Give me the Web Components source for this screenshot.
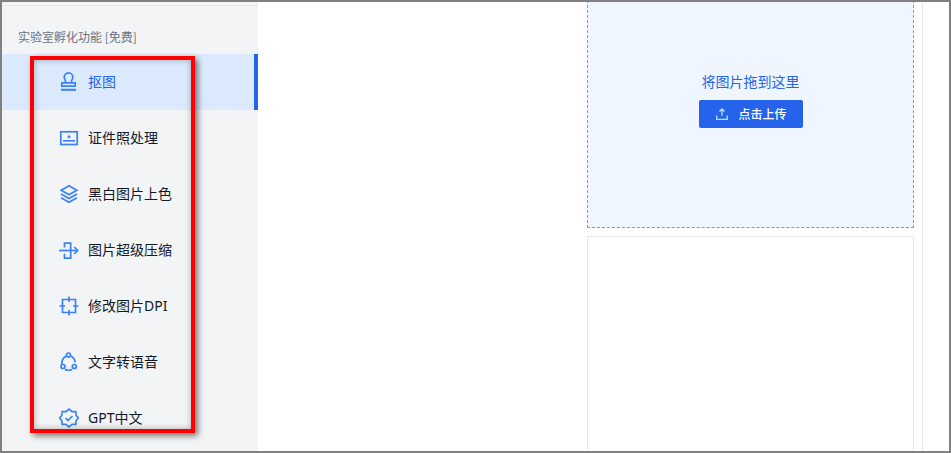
<!DOCTYPE html>
<html lang="zh"><head><meta charset="utf-8"><title>实验室孵化功能</title>
<style>
html,body{margin:0;padding:0;background:#fff;font-family:"Noto Sans","Noto Sans CJK SC",sans-serif}
</style></head><body>
<app-frame>
  <side-bar label="实验室孵化功能 [免费]">
    <nav-item active text="抠图" icon="stamp"></nav-item>
    <nav-item text="证件照处理" icon="id"></nav-item>
    <nav-item text="黑白图片上色" icon="layers"></nav-item>
    <nav-item text="图片超级压缩" icon="door"></nav-item>
    <nav-item text="修改图片DPI" icon="puzzle"></nav-item>
    <nav-item text="文字转语音" icon="share"></nav-item>
    <nav-item text="GPT中文" icon="badge"></nav-item>
  </side-bar>
  <main-panel>
    <drop-zone></drop-zone>
  </main-panel>
  <red-mark></red-mark>
</app-frame>
<script>
const ICONS={
stamp:'<path d="M6.500 10.500V9.300C6.500 8 5.200 7 5.200 5.200a4.300 4.300 0 0 1 8.600 0C13.800 7 12.500 8 12.500 9.300v1.200"/><path d="M2.800 14.200v-3.400h13.400v3.400z"/><path d="M2 17.800h15" stroke-width="2"/>',
id:'<rect x="1.800" y="3.800" width="16.400" height="12.700"/><path d="M4 12.800h12"/><circle cx="10" cy="8.700" r="1.500" fill="#3b82f6" stroke="none"/>',
layers:'<path d="M10 1.800 17.800 6.300 10 10.800 2.200 6.300z"/><path d="M2 10 10 14.500 18 10"/><path d="M2 13.700 10 18.200 18 13.700"/>',
door:'<path d="M5.500 7.500V3.200h6.200v15H5.500v-4.500"/><path d="M0 10.500h18.500"/><path d="M15.200 7 18.700 10.500l-3.500 3.500"/>',
puzzle:'<path d="M3.500 3.500h13v13h-13z"/><path d="M10 .5v5.500M10 14v5.500M.5 10h5.500M14 10h5.500"/>',
share:'<circle cx="9.500" cy="3" r="2"/><circle cx="4" cy="14.500" r="2"/><circle cx="15.300" cy="14.500" r="2"/><path d="M7.600 3.800C4.300 5.400 2.600 8.500 2.800 12.700M11.400 3.800c2.600 1.300 4.300 3.600 4.900 6.500M6 17.200c2.200 1.300 4.800 1.300 7 .2"/>',
badge:'<path d="M10 1.200 13 3.700h3.800l.4 3.800L19.500 10l-2.300 2.500-.4 3.800H13L10 18.800 7 16.300H3.200l-.4-3.800L.5 10l2.300-2.500.4-3.800H7z"/><path d="M6.500 10l2.500 2.500 4.500-4.500"/>'
};
function def(name,css,html){
  customElements.define(name,class extends HTMLElement{
    connectedCallback(){
      if(this.shadowRoot)return;
      const r=this.attachShadow({mode:'open'});
      r.innerHTML='<style>'+css+'</style>'+(typeof html==='function'?html(this):html);
    }
  });
}
def('app-frame',`:host{display:flex;position:relative;box-sizing:border-box;width:951px;height:453px;border:2px solid #808080;overflow:hidden;background:#fff}`,'<slot></slot>');
def('side-bar',`:host{display:block;flex:none;width:256px;background:#f3f4f6;box-sizing:border-box;padding-top:3px}
.top{height:1px;background:#e5e7eb}
.label{height:48px;box-sizing:border-box;padding:22px 0 0 16px;font:12px/17px "Noto Sans CJK SC",sans-serif;color:#6b7280}`,
 h=>`<div class="top"></div><div class="label">${h.getAttribute('label')}</div><slot></slot>`);
def('nav-item',`:host{display:flex;align-items:center;gap:9px;box-sizing:border-box;height:56px;padding-left:57px;font:14px/20px "Noto Sans","Noto Sans CJK SC",sans-serif;color:#111827}
:host([active]){background:#dbeafe;color:#2563eb;border-right:4px solid #2563eb}
svg{width:20px;height:20px;flex:none;fill:none;stroke:#3b82f6;stroke-width:1.700}`,
 h=>`<svg viewBox="0 0 20 20">${ICONS[h.getAttribute('icon')]}</svg><span>${h.getAttribute('text')}</span>`);
def('main-panel',`:host{display:flex;flex:1;min-width:0;background:#fff}
.col{flex:1;min-width:0;box-sizing:border-box;padding:0 8px 0 329px}
.rail{flex:none;width:26px;border-left:1px solid #e5e7eb}
.card{margin-top:8px;height:300px;border:1px solid #e5e7eb;box-sizing:border-box}`,
 `<div class="col"><slot></slot><div class="card"></div></div><div class="rail"></div>`);
def('drop-zone',`:host{display:flex;flex-direction:column;align-items:center;justify-content:center;gap:9px;box-sizing:border-box;height:258px;margin-top:-32px;background:#eff6ff;border:1px dashed #6b9cf0;color:#2563eb;font:14px/20px "Noto Sans CJK SC",sans-serif}
button{all:unset;display:flex;align-items:center;justify-content:center;gap:10px;box-sizing:border-box;width:104px;height:28px;padding-left:2px;background:#2563eb;border-radius:2px;color:#fff;font:500 12px/16px "Noto Sans CJK SC",sans-serif}
svg{width:12px;height:12px;fill:none;stroke:#bfdbfe;stroke-width:1.300}`,
 `<div>将图片拖到这里</div><button><svg viewBox="0 0 12 12"><path d="M6 8V1.200M3.500 3.500 6 1l2.500 2.500"/><path d="M.7 7.500v3.800h10.600V7.500"/></svg><span>点击上传</span></button>`);
def('red-mark',`:host{display:block;position:absolute;left:28px;top:54px;width:165px;height:377px;box-sizing:border-box;border:4px solid #f00;box-shadow:3px 3px 6px rgba(0,0,0,.5),inset 0 0 6px rgba(0,0,0,.3);pointer-events:none}`,'');
</script>
</body></html>
